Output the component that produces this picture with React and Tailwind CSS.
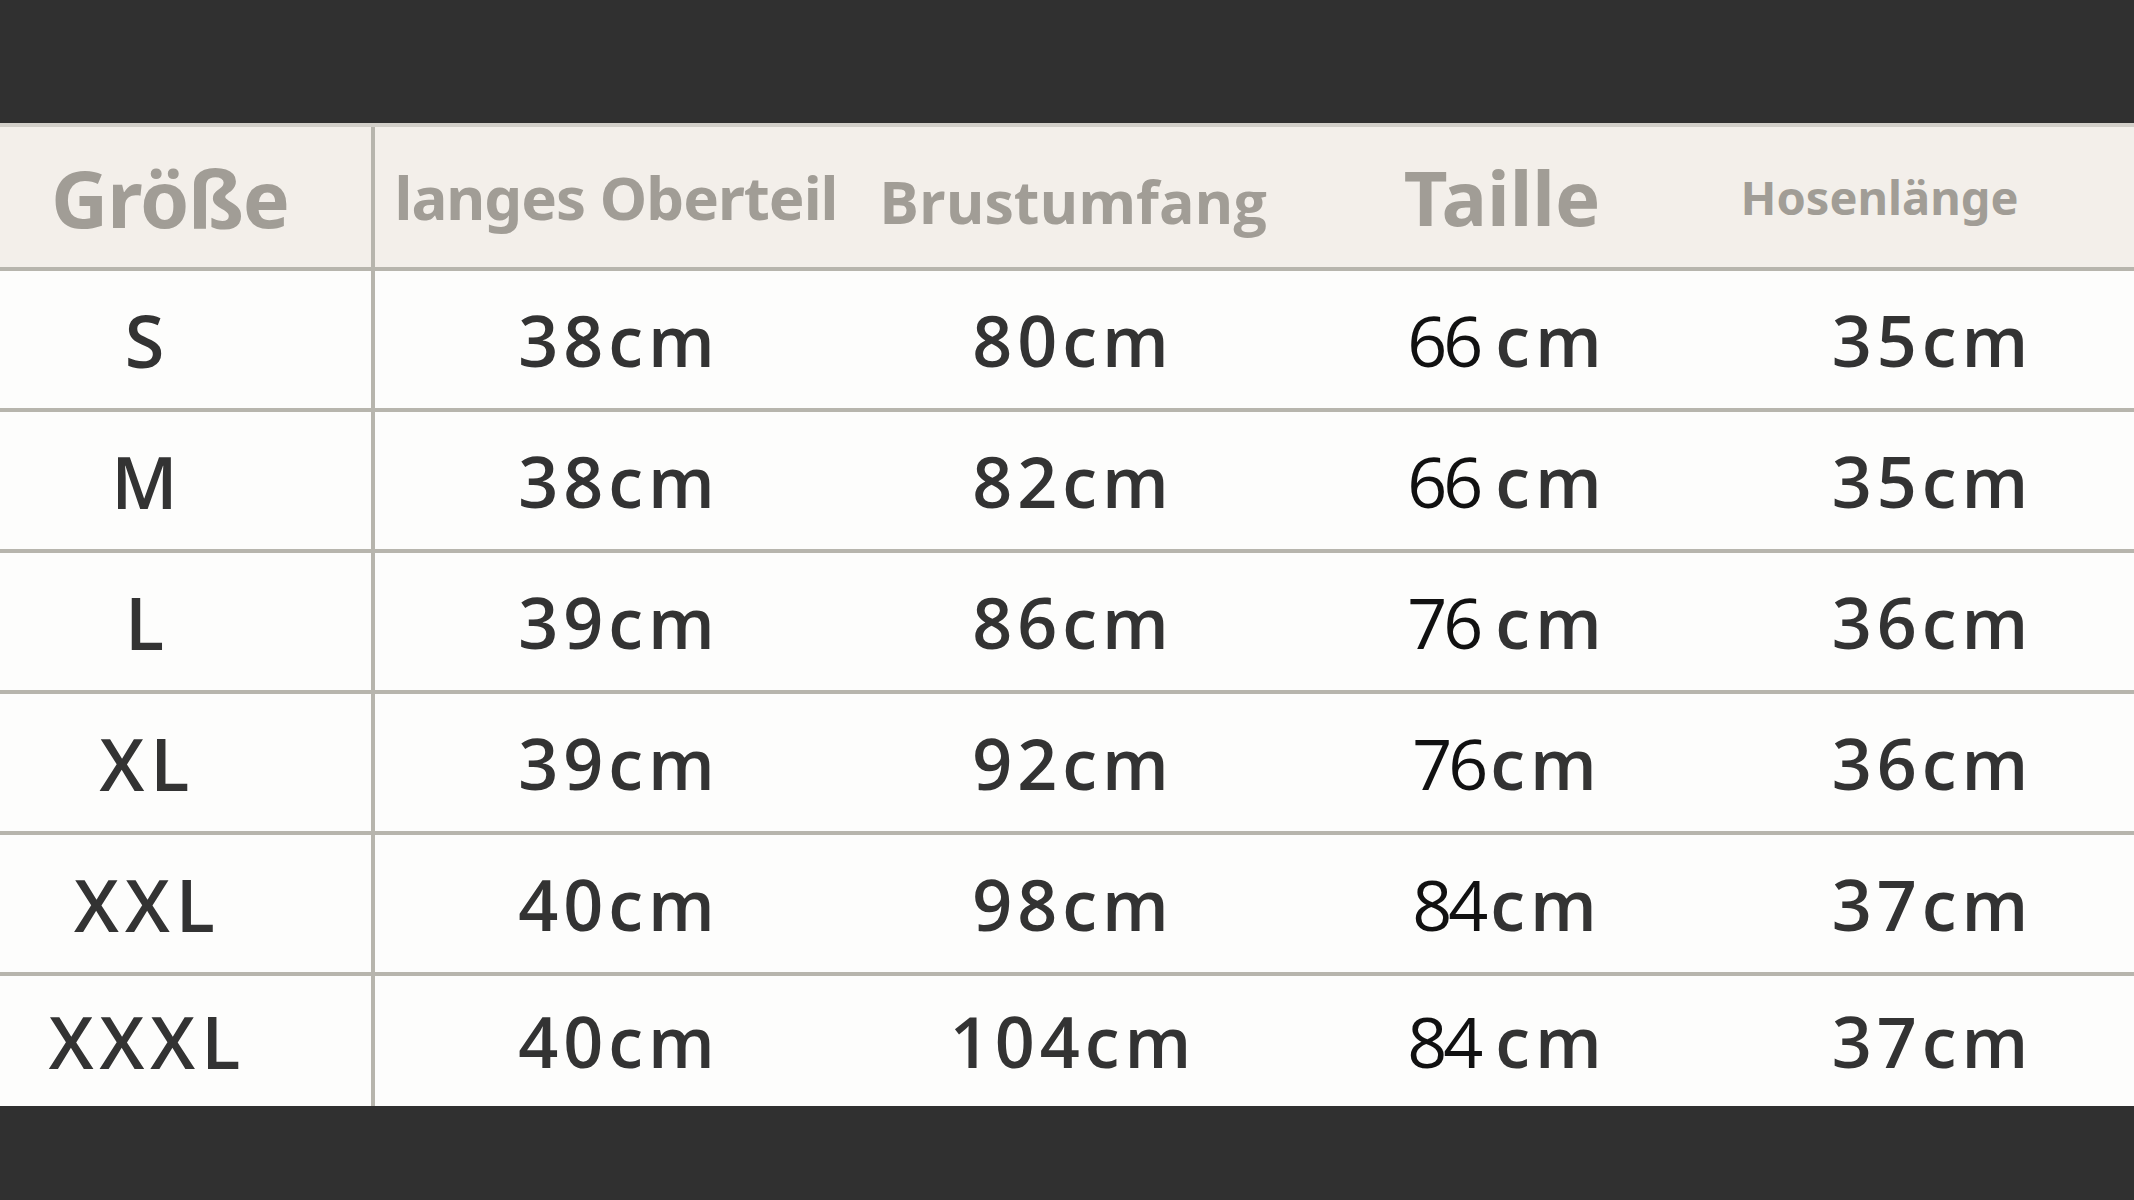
import React from "react";

const rows = [
  { size: "S", top: "38cm", chest: "80cm", waist: ["66", "cm"], pants: "35cm" },
  { size: "M", top: "38cm", chest: "82cm", waist: ["66", "cm"], pants: "35cm" },
  { size: "L", top: "39cm", chest: "86cm", waist: ["76", "cm"], pants: "36cm" },
  { size: "XL", top: "39cm", chest: "92cm", waist: ["76", "cm"], pants: "36cm" },
  { size: "XXL", top: "40cm", chest: "98cm", waist: ["84", "cm"], pants: "37cm" },
  { size: "XXXL", top: "40cm", chest: "104cm", waist: ["84", "cm"], pants: "37cm" },
];

const head = { fontFamily: "'Noto Sans', 'Open Sans', sans-serif" };
const body = { fontFamily: "'Open Sans', 'DejaVu Sans', sans-serif" };

const App = () => {
  return (
    <div className="w-[2134px] h-[1200px] bg-[#303030] flex flex-col overflow-hidden">
      <div className="h-[123px] shrink-0" />

      {/* header */}
      <div
        className="grid grid-cols-[375px_488px_420px_458px_393px] h-[144px] bg-[#f3efea] border-t-4 border-[#d2cfc9] text-[#a19d96] font-bold"
        style={head}
      >
        <div className="flex items-center justify-center border-r-4 border-[#b7b5ad] pr-[31px] text-[79px] leading-none tracking-[-1px]">
          Größe
        </div>
        <div className="flex items-center justify-center pr-[6px] text-[60px] leading-none tracking-[-1px]">
          langes Oberteil
        </div>
        <div className="flex items-center justify-center pt-[8px] text-[59px] leading-none" style={body}>
          Brustumfang
        </div>
        <div className="flex items-center justify-center pr-[20px] text-[76px] leading-none">
          Taille
        </div>
        <div className="flex items-center justify-center pr-[116px] text-[47px] leading-none">
          Hosenlänge
        </div>
      </div>

      {/* rows */}
      {rows.map((r, i) => (
        <div
          key={r.size}
          className={
            "grid grid-cols-[375px_488px_420px_458px_393px] bg-[#fdfdfc] border-t-4 border-[#b7b5ad] text-[#333333] font-semibold " +
            (i === rows.length - 1 ? "h-[134px]" : "h-[141px]")
          }
          style={body}
        >
          <div className="flex items-center justify-center border-r-4 border-[#b7b5ad] pr-[76px] text-[72px] leading-none tracking-[6px]">
            {r.size}
          </div>
          <div className="flex items-center justify-center text-[70px] leading-none tracking-[5px]">
            {r.top}
          </div>
          <div className="flex items-center justify-center text-[70px] leading-none tracking-[5px]">
            {r.chest}
          </div>
          <div className="flex items-center justify-center pr-[10px] text-[70px] leading-none">
            <span className="tracking-[-4px] text-[#111] font-medium">{r.waist[0]}</span>
            <span className={"tracking-[5px] " + (i === 3 || i === 4 ? "ml-[6px]" : "ml-[16px]")}>{r.waist[1]}</span>
          </div>
          <div className="flex items-center justify-center pr-[10px] text-[70px] leading-none tracking-[5px]">
            {r.pants}
          </div>
        </div>
      ))}

      <div className="flex-1" />
    </div>
  );
};

export default App;
